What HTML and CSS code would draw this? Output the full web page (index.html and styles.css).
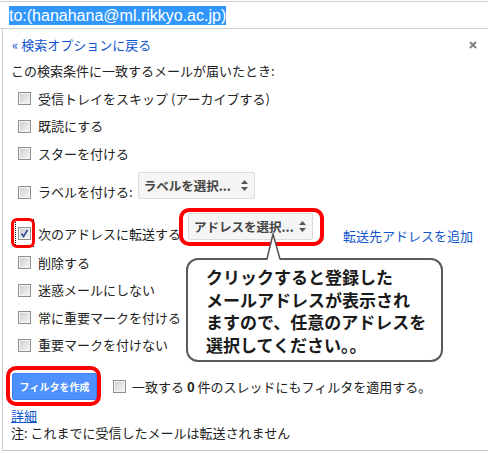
FILE: index.html
```html
<!DOCTYPE html>
<html lang="ja">
<head>
    <meta charset="UTF-8">
    <title>フィルタを作成</title>
    <link rel="stylesheet" href="styles.css">
</head>
<body>
    <!-- Search box with the selected query -->
    <div class="search">
        <span class="query">to:(hanahana@ml.rikkyo.ac.jp)</span>
    </div>

    <div class="panel">
        <div class="head">
            <a class="back" href="#">« 検索オプションに戻る</a>
            <svg class="close" width="8" height="8" viewBox="0 0 8 8">
                <path d="M1 1 L7 7 M7 1 L1 7" stroke="#808080" stroke-width="2"/>
            </svg>
        </div>
        <div class="intro">この検索条件に一致するメールが届いたとき:</div>

        <ul class="actions">
            <li class="action"><span class="check"></span><span>受信トレイをスキップ (アーカイブする)</span></li>
            <li class="action"><span class="check"></span><span>既読にする</span></li>
            <li class="action"><span class="check"></span><span>スターを付ける</span></li>
            <li class="action label-row">
                <span class="check"></span>
                <span class="text">ラベルを付ける:</span>
                <span class="select select-label">ラベルを選択...
                    <svg width="7" height="11" viewBox="0 0 7 11"><path d="M3.5 0 L7 4 L0 4 Z M0 7 L7 7 L3.5 11 Z" fill="#555"/></svg>
                </span>
            </li>
            <li class="action forward-row">
                <span class="focus mark">
                    <span class="check">
                        <svg width="11" height="11" viewBox="0 0 11 11"><path d="M2.5 5.5 L4.5 8.5 L8.5 2" stroke="#2c4a9e" stroke-width="1.6" fill="none"/></svg>
                    </span>
                </span>
                <span class="text">次のアドレスに転送する</span>
                <span class="select select-address mark">アドレスを選択...
                    <svg width="7" height="11" viewBox="0 0 7 11"><path d="M3.5 0 L7 4 L0 4 Z M0 7 L7 7 L3.5 11 Z" fill="#555"/></svg>
                </span>
                <a class="add" href="#">転送先アドレスを追加</a>
            </li>
            <li class="action"><span class="check"></span><span>削除する</span></li>
            <li class="action"><span class="check"></span><span>迷惑メールにしない</span></li>
            <li class="action"><span class="check"></span><span>常に重要マークを付ける</span></li>
            <li class="action"><span class="check"></span><span>重要マークを付けない</span></li>
        </ul>

        <div class="create-row">
            <button class="create mark" type="button">フィルタを作成</button>
            <span class="check"></span>
            <span>一致する <b>0</b> 件のスレッドにもフィルタを適用する。</span>
        </div>
        <a class="details" href="#">詳細</a>
        <div class="note">注: これまでに受信したメールは転送されません</div>

        <!-- Explanation balloon pointing at the address select -->
        <svg class="tail" width="17" height="28" viewBox="0 0 17 28">
            <path d="M8 1 L2 28 L15 28 Z" fill="#fff"/>
            <path d="M2 26 L8 1 L15 26" stroke="#555" stroke-width="1.5" fill="none"/>
        </svg>
        <div class="callout">
            クリックすると登録した<br>
            メールアドレスが表示され<br>
            ますので、任意のアドレスを<br>
            選択してください。。
        </div>
    </div>
</body>
</html>
```

FILE: styles.css
```css
body {
    margin: 0;
    font-family: "Noto Sans CJK JP", sans-serif;
    font-size: 13px;
    color: #222;
    background-color: #fff;
}
a {
    color: #15c;
    text-decoration: none;
}
.search {
    margin-top: 1px;
    height: 26px;
    padding-left: 9px;
    display: flex;
    align-items: center;
    border-top: 1px solid #cfcfcf;
    border-bottom: 1px solid #cfcfcf;
}
.query {
    font-family: "Liberation Sans", Arial, sans-serif;
    font-size: 16px;
    line-height: 19px;
    background-color: #3297fd;
    color: #fff;
}
.panel {
    position: relative;
    margin-left: 2px;
    padding: 6px 11px 9px 8px;
    border-left: 1px solid #cfcfcf;
    border-bottom: 1px solid #c4c4c4;
    box-shadow: 0 2px 2px -1px rgba(0, 0, 0, 0.2);
}
.head {
    height: 20px;
    display: flex;
    justify-content: space-between;
    align-items: center;
}
.back {
    line-height: 20px;
    padding-left: 1px;
}
.intro {
    margin-top: 6px;
    line-height: 20px;
}
.actions {
    list-style: none;
    margin: 4px 0 0;
    padding: 0;
}
.action {
    height: 27.5px;
    padding-left: 7px;
    display: flex;
    align-items: center;
    gap: 7px;
    line-height: 14px;
    white-space: nowrap;
}
.action > * {
    flex: none;
}
.check {
    flex: none;
    width: 13px;
    height: 13px;
    box-sizing: border-box;
    border: 1px solid #8f8f8f;
    box-shadow: inset 0 0 0 1px #f4f4f4;
    background: linear-gradient(135deg, #cdcdcd, #f6f6f6);
    display: flex;
    align-items: center;
    justify-content: center;
}
.select {
    height: 27px;
    box-sizing: border-box;
    padding: 0 6px 0 5px;
    display: inline-flex;
    align-items: center;
    justify-content: space-between;
    background-color: #f5f5f5;
    border: 1px solid #dcdcdc;
    border-radius: 2px;
    font-size: 12.5px;
    font-weight: bold;
    color: #444;
}
.select-label {
    width: 117px;
}
.select-address {
    width: 125px;
}
.label-row {
    height: auto;
    padding-top: 4.5px;
    align-items: flex-end;
}
.label-row .select {
    margin-left: -2px;
}
.forward-row {
    height: 36px;
    padding-top: 13px;
    margin-bottom: 1px;
    align-items: flex-start;
    gap: 0;
}
.focus {
    width: 19px;
    height: 28px;
    box-sizing: border-box;
    margin: 7px 0 0 -3px;
    padding-bottom: 6px;
    border: 1px dotted #000;
    display: flex;
    align-items: flex-end;
    justify-content: center;
}
.forward-row .text {
    margin: 15px 0 0 4px;
}
.forward-row .select {
    margin: 1px 0 0 7px;
}
.add {
    margin: 17px 0 0 30px;
}
.mark {
    position: relative;
}
.mark::after {
    content: "";
    position: absolute;
    border: 4px solid #f00;
    border-radius: 10px;
    pointer-events: none;
}
.focus.mark::after {
    inset: -2px -2px -2px -5px;
    border-width: 3px;
    border-radius: 6px;
}
.select.mark::after {
    inset: -6px -12px -7px -10px;
}
.create.mark::after {
    inset: -8px -5px -7px -7px;
}
.create-row {
    margin-top: 14px;
    display: flex;
    align-items: center;
    line-height: 14px;
    white-space: nowrap;
}
.create {
    flex: none;
    width: 85px;
    height: 27px;
    margin: 0 16px 0 1px;
    padding: 0;
    background-color: #4d90fe;
    border: 1px solid #3d80ee;
    border-radius: 2px;
    color: #fff;
    font-family: "Noto Sans CJK JP", sans-serif;
    font-size: 10px;
    font-weight: bold;
}
.create-row .check {
    margin-right: 6px;
}
.details {
    display: block;
    width: max-content;
    margin-top: 8px;
    line-height: 16px;
    text-decoration: underline;
}
.note {
    margin-top: 1px;
    line-height: 16px;
}
.tail {
    position: absolute;
    left: 262px;
    top: 204px;
    z-index: 2;
}
.callout {
    position: absolute;
    left: 183px;
    top: 229px;
    width: 257px;
    height: 104px;
    box-sizing: border-box;
    padding: 6px 0 0 18px;
    background-color: #fff;
    border: 2px solid #5a5a5a;
    border-radius: 12px;
    font-size: 17px;
    font-weight: bold;
    line-height: 22.5px;
    color: #1a1a1a;
    z-index: 1;
}
```
